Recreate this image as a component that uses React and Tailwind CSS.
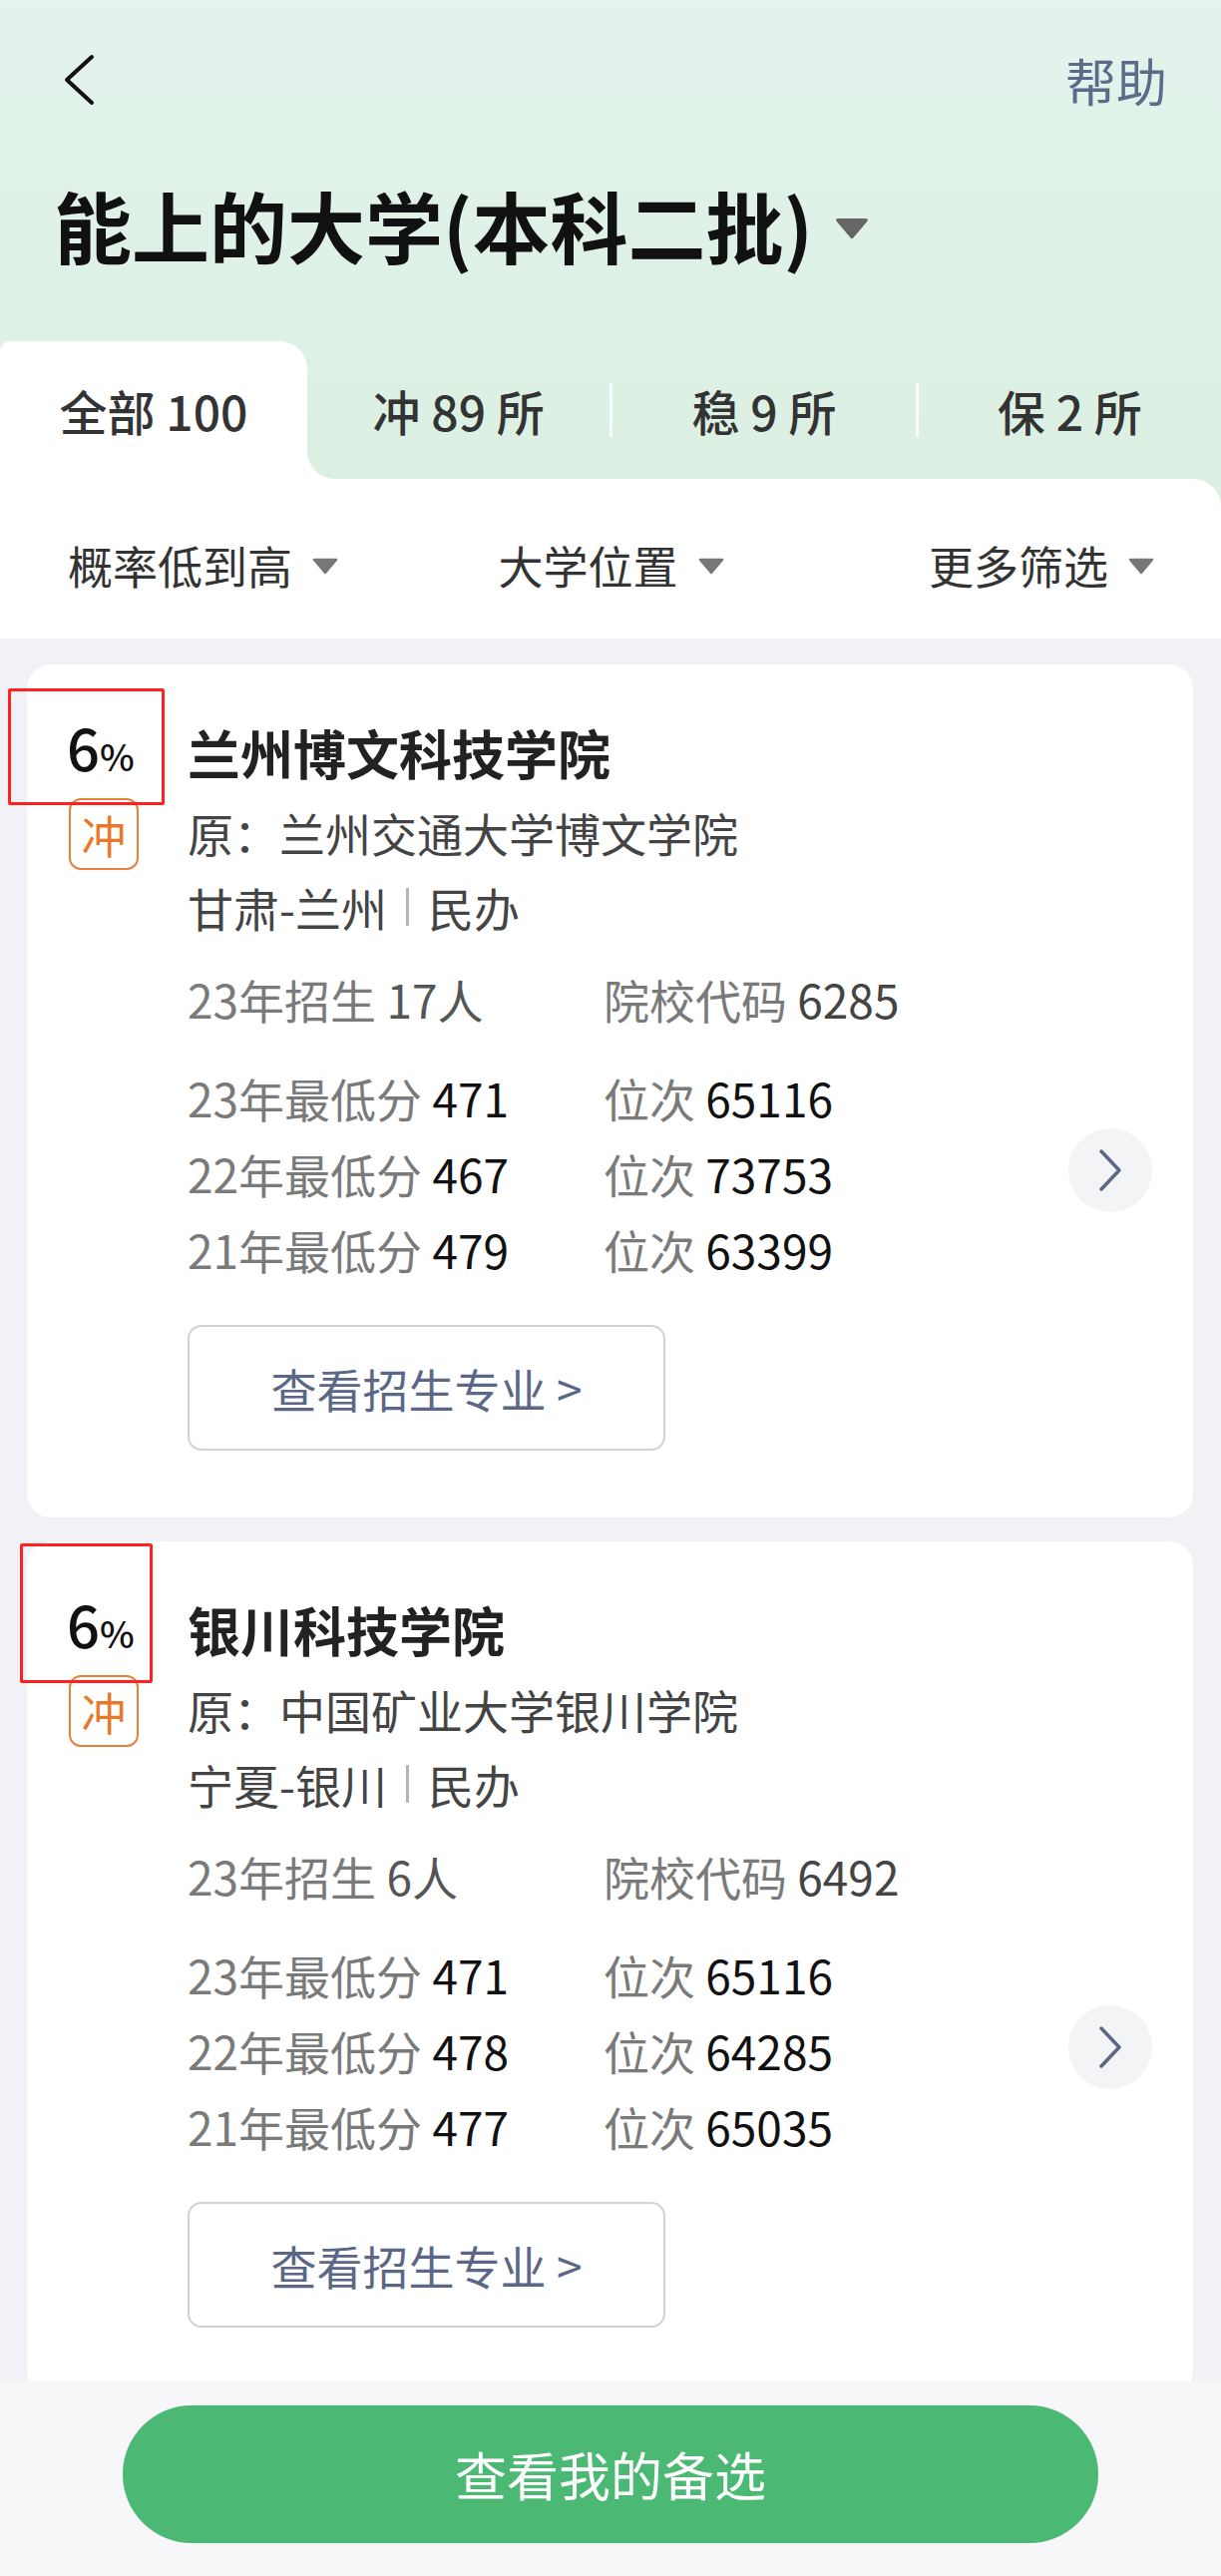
import React from "react";

const Tri = ({ w = 26, h = 17, color = "#777" }) => (
  <svg width={w} height={h} viewBox="0 0 26 17">
    <path d="M2 2 L24 2 L13 15 Z" fill={color} stroke={color} strokeWidth="2.5" strokeLinejoin="round" />
  </svg>
);

const cards = [
  {
    name: "兰州博文科技学院",
    orig: "原：兰州交通大学博文学院",
    prov: "甘肃-兰州",
    enroll: "17人",
    code: "6285",
    scores: [
      ["23", "471", "65116"],
      ["22", "467", "73753"],
      ["21", "479", "63399"],
    ],
    box: "left-[-19px] top-[24px] w-[157px] h-[117px]",
  },
  {
    name: "银川科技学院",
    orig: "原：中国矿业大学银川学院",
    prov: "宁夏-银川",
    enroll: "6人",
    code: "6492",
    scores: [
      ["23", "471", "65116"],
      ["22", "478", "64285"],
      ["21", "477", "65035"],
    ],
    box: "left-[-7px] top-[2px] w-[133px] h-[140px]",
  },
];

function Card({ c }) {
  return (
    <div className="relative bg-white rounded-[24px] flex shrink-0 pr-[41px]">
      <div className={`absolute border-[3px] border-[#ff2020] rounded-[2px] ${c.box}`} />
      <div className="w-[161px] shrink-0 pl-[42px] pt-[53px] flex flex-col items-start">
        <div className="leading-none text-[#111] ml-[-2px] font-medium">
          <span className="text-[58px]">6</span>
          <span className="text-[37px]">%</span>
        </div>
        <div className="mt-[23px] w-[70px] h-[72px] border-2 border-[#e4823c] rounded-[12px] flex items-center justify-center text-[45px] text-[#e8792b] leading-none">
          冲
        </div>
      </div>
      <div className="flex-1 pt-[58px] pb-[67px]">
        <div className="text-[53px] font-bold leading-[60px] text-[#222]">{c.name}</div>
        <div className="mt-[20px] text-[46px] leading-[60px] text-[#444]">{c.orig}</div>
        <div className="mt-[15px] text-[46px] leading-[60px] text-[#444] flex items-center">
          <span>{c.prov}</span>
          <span className="mx-[19px] w-[3px] h-[38px] bg-[#b5b5b5]" />
          <span>民办</span>
        </div>
        <div className="mt-[32px] text-[46px] leading-[60px] flex">
          <div className="w-[417px]">
            <span className="text-[#7a7a7a]">23年招生 </span>
            <span className="text-[#555]">{c.enroll}</span>
          </div>
          <div>
            <span className="text-[#7a7a7a]">院校代码 </span>
            <span className="text-[#444]">{c.code}</span>
          </div>
        </div>
        <div className="mt-[31px] flex items-center justify-between">
          <div className="text-[46px] leading-[76px]">
            {c.scores.map(([y, s, r]) => (
              <div key={y} className="flex">
                <div className="w-[417px]">
                  <span className="text-[#7a7a7a]">{y}年最低分 </span>
                  <span className="text-[#111]">{s}</span>
                </div>
                <div>
                  <span className="text-[#7a7a7a]">位次 </span>
                  <span className="text-[#111]">{r}</span>
                </div>
              </div>
            ))}
          </div>
          <div className="w-[84px] h-[84px] mt-[-6px] rounded-full bg-[#f3f4f6] flex items-center justify-center">
            <svg width="24" height="44" viewBox="0 0 24 44">
              <path d="M3 3 L21 22 L3 41" fill="none" stroke="#5a6785" strokeWidth="3.5" strokeLinecap="round" strokeLinejoin="round" />
            </svg>
          </div>
        </div>
        <div className="mt-[38px] w-[479px] h-[126px] border-2 border-[#d2d2d2] rounded-[14px] flex items-center justify-center text-[46px] text-[#5b6787]">
          查看招生专业 &gt;
        </div>
      </div>
    </div>
  );
}

export default function App() {
  return (
    <div className="w-[1224px] h-[2582px] flex flex-col overflow-hidden bg-[#f2f2f6] font-['Noto_Sans_CJK_SC','Noto_Sans',sans-serif]">
      <div className="bg-[linear-gradient(180deg,#e4f3ec_0%,#ddf1e5_55%,#d8efe0_100%)]">
        <div className="h-[160px] flex items-center justify-between pl-[63px] pr-[54px]">
          <svg width="32" height="52" viewBox="0 0 32 52">
            <path d="M29 3 L4 26 L29 49" fill="none" stroke="#111" strokeWidth="4" strokeLinecap="round" strokeLinejoin="round" />
          </svg>
          <span className="text-[51px] text-[#5d6a8a] leading-none">帮助</span>
        </div>
        <div className="mt-[26px] h-[78px] flex items-center pl-[54px]">
          <span className="text-[78px] font-bold leading-none text-[#111]">能上的大学(本科二批)</span>
          <span className="ml-[22px] mt-[8px]">
            <Tri w={34} h={22} color="#666" />
          </span>
        </div>
        <div className="mt-[78px] h-[138px] flex">
          <div className="w-[308px] bg-white rounded-tr-[28px] rounded-tl-[10px] flex items-center justify-center text-[48px] font-medium text-[#333]">
            全部 100
          </div>
          <div className="flex-1 flex items-center relative">
            <div className="flex-1 text-center text-[48px] font-medium text-[#333]">冲 89 所</div>
            <div className="w-[3px] h-[54px] bg-white/80" />
            <div className="flex-1 text-center text-[48px] font-medium text-[#333]">稳 9 所</div>
            <div className="w-[3px] h-[54px] bg-white/80" />
            <div className="flex-1 text-center text-[48px] font-medium text-[#333]">保 2 所</div>
            <div className="absolute left-0 bottom-0 w-[28px] h-[28px] bg-[radial-gradient(circle_at_100%_0%,transparent_27.5px,#ffffff_28.5px)]" />
          </div>
        </div>
        <div className="h-[160px] bg-white rounded-tr-[28px] flex items-center pt-[14px] text-[45px] text-[#333]">
          <div className="flex-1 flex items-center justify-start pl-[68px]">
            <span>概率低到高</span>
            <span className="ml-[20px]"><Tri /></span>
          </div>
          <div className="flex-1 flex items-center justify-center">
            <span>大学位置</span>
            <span className="ml-[20px]"><Tri /></span>
          </div>
          <div className="flex-1 flex items-center justify-end pr-[67px]">
            <span>更多筛选</span>
            <span className="ml-[20px]"><Tri /></span>
          </div>
        </div>
      </div>
      <div className="flex-1 overflow-hidden pl-[27px] pr-[28px] pt-[26px] flex flex-col gap-[24px]">
        {cards.map((c) => (
          <Card key={c.name} c={c} />
        ))}
      </div>
      <div className="h-[195px] shrink-0 bg-[#f7f7f9] flex justify-center pt-[24px]">
        <div className="w-[978px] h-[138px] rounded-full bg-[#4bb974] flex items-center justify-center text-[52px] text-white">
          查看我的备选
        </div>
      </div>
    </div>
  );
}
